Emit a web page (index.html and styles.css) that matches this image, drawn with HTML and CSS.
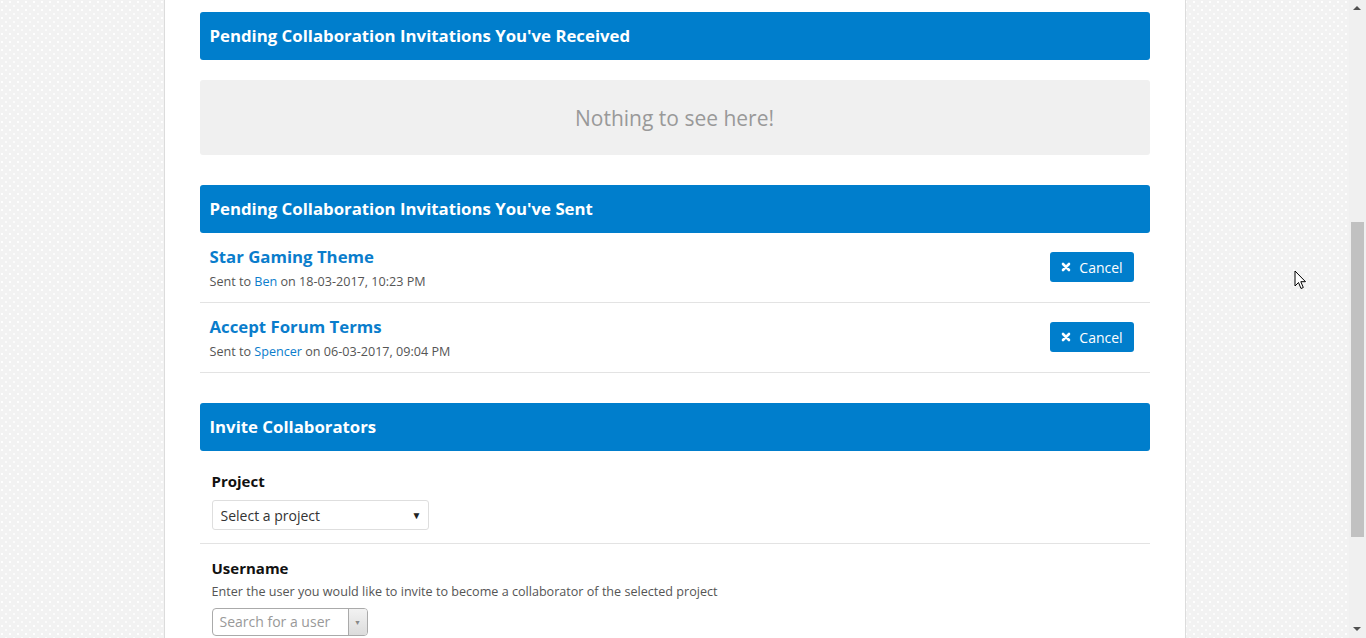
FILE: index.html
```html
<!DOCTYPE html>
<html>
<head>
<meta charset="utf-8">
<link rel="stylesheet" href="styles.css">
</head>
<body>
<div class="viewport">
  <div class="page">
    <main class="container">
      <section class="panel">
        <h2 class="panel-head">Pending Collaboration Invitations You've Received</h2>
        <div class="empty">Nothing to see here!</div>
      </section>

      <section class="panel">
        <h2 class="panel-head">Pending Collaboration Invitations You've Sent</h2>
        <div class="row">
          <div class="row-info">
            <a class="row-title" href="#">Star Gaming Theme</a>
            <div class="row-sub">Sent to <a href="#">Ben</a> on 18-03-2017, 10:23 PM</div>
          </div>
          <button class="btn-cancel"><svg class="x-icon" viewBox="0 0 10 10" width="10" height="10"><path d="M2 2 L8 8 M8 2 L2 8" stroke="#fff" stroke-width="2.6" stroke-linecap="round"/></svg>Cancel</button>
        </div>
        <div class="row">
          <div class="row-info">
            <a class="row-title" href="#">Accept Forum Terms</a>
            <div class="row-sub">Sent to <a href="#">Spencer</a> on 06-03-2017, 09:04 PM</div>
          </div>
          <button class="btn-cancel"><svg class="x-icon" viewBox="0 0 10 10" width="10" height="10"><path d="M2 2 L8 8 M8 2 L2 8" stroke="#fff" stroke-width="2.6" stroke-linecap="round"/></svg>Cancel</button>
        </div>
      </section>

      <section class="panel">
        <h2 class="panel-head">Invite Collaborators</h2>
        <div class="field">
          <label class="field-label">Project</label>
          <div class="select">
            <span>Select a project</span>
            <span class="caret">&#9660;</span>
          </div>
        </div>
        <div class="field field-divided">
          <label class="field-label">Username</label>
          <div class="field-desc">Enter the user you would like to invite to become a collaborator of the selected project</div>
          <div class="search">
            <span class="search-text">Search for a user</span>
            <span class="search-arrow">&#9660;</span>
          </div>
        </div>
      </section>
    </main>
    <svg class="cursor" width="13" height="20" viewBox="0 0 13 20"><path d="M1 1 L1 16 L4.5 12.5 L7 18.5 L9.3 17.5 L6.8 11.7 L11.5 11.7 Z" fill="#fff" stroke="#000" stroke-width="1" stroke-linejoin="round"/></svg>
  </div>
  <div class="scrollbar">
    <div class="sb-arrow sb-up"></div>
    <div class="sb-track"><div class="sb-thumb"></div></div>
    <div class="sb-arrow sb-down"></div>
  </div>
</div>
</body>
</html>
```

FILE: styles.css
```css
html, body {
  margin: 0;
  padding: 0;
  height: 100%;
  overflow: hidden;
}
body {
  font-family: "Open Sans", "Liberation Sans", sans-serif;
  color: #333;
}
.viewport {
  display: flex;
  height: 638px;
}
.page {
  flex: 1;
  position: relative;
  background-color: #f2f2f2;
  background-image:
    radial-gradient(circle at 2px 2px, rgba(255,255,255,0.9) 1px, transparent 1.5px),
    radial-gradient(circle at 6px 6px, rgba(255,255,255,0.7) 1px, transparent 1.5px);
  background-size: 8px 8px;
  overflow: hidden;
}
.container {
  width: 950px;
  margin: 0 auto;
  padding: 12px 35px 0;
  background: #fff;
  border-left: 1px solid #dcdcdc;
  border-right: 1px solid #dcdcdc;
  height: 100%;
  box-sizing: content-box;
}
.panel + .panel {
  margin-top: 30px;
}
.panel-head {
  margin: 0;
  height: 48px;
  display: flex;
  align-items: center;
  padding: 0 0 1px 10px;
  box-sizing: border-box;
  background: #007ecc;
  color: #fff;
  font-size: 16.8px;
  font-weight: 700;
  border-radius: 3px;
}
.empty {
  margin-top: 20px;
  height: 75px;
  background: #f0f0f0;
  border-radius: 3px;
  display: flex;
  align-items: center;
  justify-content: center;
  color: #999;
  font-size: 21px;
}
.row {
  display: flex;
  align-items: center;
  justify-content: space-between;
  padding: 13px 16px 11px 10px;
  border-bottom: 1px solid #e3e3e3;
}
.row-info {
  display: flex;
  flex-direction: column;
}
.row-title {
  font-size: 16.8px;
  font-weight: 700;
  line-height: 22px;
  color: #0a7dcc;
  text-decoration: none;
}
.row-sub {
  margin-top: 5px;
  font-size: 12.6px;
  line-height: 18px;
  color: #555;
}
.row-sub a {
  color: #0a7dcc;
  text-decoration: none;
}
.btn-cancel {
  display: flex;
  align-items: center;
  justify-content: center;
  gap: 8px;
  width: 84px;
  height: 30px;
  margin-bottom: 3px;
  padding: 0 0 0 1px;
  border: none;
  border-radius: 3px;
  background: #007ecc;
  color: #fff;
  font-family: "Open Sans", "Liberation Sans", sans-serif;
  font-size: 14px;
}
.x-icon {
  display: block;
}
.field {
  padding: 20px 12px 13px;
}
.field-divided {
  border-top: 1px solid #e3e3e3;
  padding-top: 14px;
}
.field-label {
  display: block;
  font-size: 15px;
  font-weight: 700;
  line-height: 20px;
  color: #111;
}
.select {
  margin-top: 9px;
  width: 217px;
  height: 30px;
  box-sizing: border-box;
  border: 1px solid #dedede;
  border-radius: 3px;
  display: flex;
  align-items: center;
  justify-content: space-between;
  padding: 0 6px 0 8px;
  font-size: 14px;
  color: #333;
}
.caret {
  font-size: 10px;
  color: #222;
}
.field-desc {
  margin-top: 4px;
  font-size: 12.6px;
  line-height: 19px;
  color: #555;
}
.search {
  margin-top: 7px;
  width: 156px;
  height: 28px;
  box-sizing: border-box;
  border: 1px solid #aaa;
  border-radius: 4px;
  display: flex;
  align-items: stretch;
  font-size: 14px;
  overflow: hidden;
}
.search-text {
  flex: 1;
  display: flex;
  align-items: center;
  padding: 0 0 2px 7px;
  color: #999;
}
.search-arrow {
  width: 18px;
  border-left: 1px solid #aaa;
  background: linear-gradient(#f2f2f2, #dcdcdc);
  color: #888;
  font-size: 7px;
  display: flex;
  align-items: center;
  justify-content: center;
}
.cursor {
  position: absolute;
  left: 1294px;
  top: 270px;
}
.scrollbar {
  width: 17px;
  background: #f0f0f0;
  display: flex;
  flex-direction: column;
}
.sb-arrow {
  height: 17px;
  position: relative;
}
.sb-up::after, .sb-down::after {
  content: "";
  position: absolute;
  left: 4px;
  top: 6px;
  border-left: 4px solid transparent;
  border-right: 4px solid transparent;
}
.sb-up::after {
  border-bottom: 4px solid #505050;
}
.sb-down::after {
  border-top: 4px solid #505050;
}
.sb-track {
  flex: 1;
  padding-top: 205px;
}
.sb-thumb {
  margin: 0 2px;
  height: 315px;
  background: #c1c1c1;
}
```
